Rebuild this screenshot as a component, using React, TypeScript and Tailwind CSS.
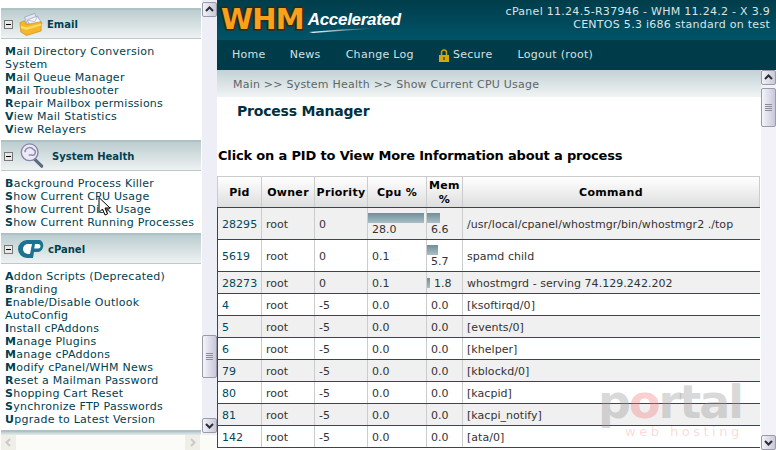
import React from "react";

const menus = [
  { title: "Email", icon: "mail", titleClass: "ml-[3px]", items: ["Mail Directory Conversion System", "Mail Queue Manager", "Mail Troubleshooter", "Repair Mailbox permissions", "View Mail Statistics", "View Relayers"] },
  { title: "System Health", icon: "health", titleClass: "ml-[8px]", items: ["Background Process Killer", "Show Current CPU Usage", "Show Current Disk Usage", "Show Current Running Processes"] },
  { title: "cPanel", icon: "cpanel", titleClass: "ml-[4px]", items: ["Addon Scripts (Deprecated)", "Branding", "Enable/Disable Outlook AutoConfig", "Install cPAddons", "Manage Plugins", "Manage cPAddons", "Modify cPanel/WHM News", "Reset a Mailman Password", "Shopping Cart Reset", "Synchronize FTP Passwords", "Upgrade to Latest Version"] },
];

const rows = [
  { pid: "28295", pri: "0", cpu: "28.0", cpuBar: 56, mem: "6.6", memBar: 13, cmd: "/usr/local/cpanel/whostmgr/bin/whostmgr2 ./top", h: "h-[32px]" },
  { pid: "5619", pri: "0", cpu: "0.1", cpuBar: 0, mem: "5.7", memBar: 11, cmd: "spamd child", h: "h-[32px]" },
  { pid: "28273", pri: "0", cpu: "0.1", cpuBar: 0, mem: "1.8", memBar: 3, cmd: "whostmgrd - serving 74.129.242.202", h: "h-[22px]", inline: true },
  { pid: "4", pri: "-5", cpu: "0.0", cpuBar: 0, mem: "0.0", memBar: 0, cmd: "[ksoftirqd/0]", h: "h-[22px]" },
  { pid: "5", pri: "-5", cpu: "0.0", cpuBar: 0, mem: "0.0", memBar: 0, cmd: "[events/0]", h: "h-[22px]" },
  { pid: "6", pri: "-5", cpu: "0.0", cpuBar: 0, mem: "0.0", memBar: 0, cmd: "[khelper]", h: "h-[22px]" },
  { pid: "79", pri: "-5", cpu: "0.0", cpuBar: 0, mem: "0.0", memBar: 0, cmd: "[kblockd/0]", h: "h-[22px]" },
  { pid: "80", pri: "-5", cpu: "0.0", cpuBar: 0, mem: "0.0", memBar: 0, cmd: "[kacpid]", h: "h-[22px]" },
  { pid: "81", pri: "-5", cpu: "0.0", cpuBar: 0, mem: "0.0", memBar: 0, cmd: "[kacpi_notify]", h: "h-[22px]" },
  { pid: "142", pri: "-5", cpu: "0.0", cpuBar: 0, mem: "0.0", memBar: 0, cmd: "[ata/0]", h: "h-[22px]" },
];

function MailIcon() {
  return (
    <svg width="24" height="25" viewBox="0 0 26 26">
      <path d="M6 5 L17 1 L21 10 L9 13 Z" fill="#e4e8f4" stroke="#8a94b8" strokeWidth="0.7" />
      <path d="M9 8 L20 4 L25 12 L12 15 Z" fill="#f4f6fc" stroke="#8a94b8" strokeWidth="0.7" />
      <path d="M10 8.5 L17 10 L20 4.5" fill="none" stroke="#9aa4c4" strokeWidth="0.7" />
      <path d="M1 11 L6 9 L8 13 L24 10 L24 20 L8 25 L2 21 Z" fill="#f4b62c" stroke="#c98a14" strokeWidth="0.7" />
      <path d="M2 14 L8 16 L24 12 L24 14 L8 19 L2 17 Z" fill="#ffdb5c" />
    </svg>
  );
}

function HealthIcon() {
  return (
    <svg width="25" height="26" viewBox="0 0 26 28">
      <path d="M16 17 L24 25" stroke="#5d6a80" strokeWidth="3.4" strokeLinecap="round" />
      <circle cx="11" cy="10" r="9" fill="#eceaf6" stroke="#8684a8" strokeWidth="1.4" />
      <path d="M6 10 a5 5 0 0 1 9 -3 M15 7 a3 3 0 0 1 -2 6 l-3 0" fill="none" stroke="#8e8bb0" strokeWidth="1.6" />
    </svg>
  );
}

function CpanelIcon() {
  return (
    <svg width="26" height="20" viewBox="0 0 26 20">
      <path d="M9 1 L22 1 A6.5 6.5 0 0 1 20 13 L16 13 L15 19 L9 19 A9 9 0 0 1 9 1 Z" fill="#1a7390" />
      <path d="M10 5 A5 5 0 0 0 10 15 L12 15 L14 5 Z" fill="#fff" />
      <path d="M17 5 L20.5 5 A2.2 2.2 0 0 1 20 9.5 L16.2 9.5 Z" fill="#fff" />
    </svg>
  );
}

const icons: Record<string, React.ReactNode> = {
  mail: <MailIcon />,
  health: <HealthIcon />,
  cpanel: <CpanelIcon />,
};

function SectionHead({ title, icon, titleClass }: { title: string; icon: string; titleClass: string }) {
  return (
    <div className="h-[31px] flex items-center pl-[3px] border-t-[2px] border-b-[1px] border-t-[#aec2c6] border-b-[#b9c9cc] bg-gradient-to-b from-[#bccdd0] to-[#eef2f2]">
      <div className="w-[9px] h-[9px] border border-[#777] bg-[#e8e8e8] flex items-center justify-center shrink-0">
        <div className="w-[5px] h-[1px] bg-black" />
      </div>
      <div className="ml-[5px] w-[26px] flex justify-center shrink-0">{icons[icon]}</div>
      <span className={titleClass + " font-bold text-[10px] text-[#00414f]"}>{title}</span>
    </div>
  );
}

function Arrow({ dir, pale }: { dir: "up" | "down" | "left" | "right"; pale?: boolean }) {
  const points = { up: "2,7 5.5,3.5 9,7", down: "2,4 5.5,7.5 9,4", left: "7,2 3.5,5.5 7,9", right: "4,2 7.5,5.5 4,9" }[dir];
  return (
    <svg width="11" height="11" viewBox="0 0 11 11">
      <polyline points={points} fill="none" stroke={pale ? "#c9c9cf" : "#2d2d36"} strokeWidth="2" />
    </svg>
  );
}

function ScrollButton({ dir }: { dir: "up" | "down" }) {
  return (
    <div className="w-[15px] h-[15px] shrink-0 flex items-center justify-center rounded-[2px] border border-[#9a9aa8] bg-gradient-to-r from-[#f2f2f8] to-[#c8c8d8]">
      <Arrow dir={dir} />
    </div>
  );
}

function Thumb({ height }: { height: string }) {
  return (
    <div className={height + " w-[15px] shrink-0 flex flex-col items-center justify-center gap-[1px] rounded-[2px] border border-[#9a9aa8] bg-gradient-to-r from-[#f4f4fa] to-[#c8c8dc]"}>
      <div className="w-[7px] h-[1px] bg-[#8a8a98]" />
      <div className="w-[7px] h-[1px] bg-[#8a8a98]" />
      <div className="w-[7px] h-[1px] bg-[#8a8a98]" />
      <div className="w-[7px] h-[1px] bg-[#8a8a98]" />
    </div>
  );
}

function Sidebar() {
  return (
    <div className="w-[217px] h-[450px] shrink-0 flex flex-col bg-white">
      <div className="h-[435px] flex">
        <div className="w-[200px] overflow-hidden pt-[8px] ml-[1px]">
          {menus.map((m) => (
            <div key={m.title}>
              <SectionHead title={m.title} icon={m.icon} titleClass={m.titleClass} />
              <ul className="pt-[6px] pb-[4px] pl-[4px] pr-[4px]">
                {m.items.map((item) => (
                  <li key={item} className="text-[11px] leading-[13px] text-[#00414f] tracking-[0.25px]">
                    <b>{item[0]}</b>{item.slice(1)}
                  </li>
                ))}
              </ul>
            </div>
          ))}
          <div className="h-[5px] border-t-[2px] border-[#aec2c6] bg-gradient-to-b from-[#bccdd0] to-[#e4ebeb]" />
        </div>
        <div className="w-[15px] ml-[1px] pt-[2px] flex flex-col bg-[#eeeef6]">
          <ScrollButton dir="up" />
          <div className="h-[318px] shrink-0" />
          <Thumb height="h-[43px]" />
          <div className="h-[40px] shrink-0" />
          <ScrollButton dir="down" />
        </div>
      </div>
      <div className="h-[15px] pl-[1px] pr-[17px] flex justify-between bg-[#fbfbf8]">
        <div className="w-[15px] h-[15px] flex items-center justify-center bg-[#efefe8]"><Arrow dir="left" pale /></div>
        <div className="w-[15px] h-[15px] flex items-center justify-center bg-[#efefe8]"><Arrow dir="right" pale /></div>
      </div>
    </div>
  );
}

function Logo() {
  return (
    <div className="relative pl-[4px] pt-[6px] flex items-start">
      <span className="font-bold text-[29px] leading-[26px] text-[#f9a11b] [-webkit-text-stroke:3px_#33281a] [paint-order:stroke_fill] tracking-[-0.8px]">WHM</span>
      <span className="ml-[4px] mt-[5px] font-['Liberation_Sans',sans-serif] italic font-bold text-[17px] leading-[18px] text-white tracking-[-0.3px]">Accelerated</span>
      <svg width="70" height="5" viewBox="0 0 70 5" className="absolute left-[92px] top-[28px]">
        <defs>
          <linearGradient id="swoosh">
            <stop offset="0" stopColor="#fff" />
            <stop offset="1" stopColor="#fff" stopOpacity="0" />
          </linearGradient>
        </defs>
        <path d="M0 4 Q30 1 70 0 Q30 3 4 5 Z" fill="url(#swoosh)" />
      </svg>
    </div>
  );
}

function TopBar() {
  return (
    <div className="shrink-0">
      <div className="h-[40px] flex justify-between bg-gradient-to-b from-[#003d4b] to-[#005468]">
        <Logo />
        <div className="pr-[6px] pt-[5px] text-right text-[11px] leading-[13px] text-[#d8e4e6] tracking-[0.28px]">
          <div>cPanel 11.24.5-R37946 - WHM 11.24.2 - X 3.9</div>
          <div>CENTOS 5.3 i686 standard on test</div>
        </div>
      </div>
      <nav className="h-[30px] flex items-center pl-[15px] pt-[1px] bg-[#003b4a] text-[11px] text-[#d4e0e2] tracking-[0.3px]">
        <span>Home</span>
        <span className="ml-[24px]">News</span>
        <span className="ml-[25px]">Change Log</span>
        <span className="ml-[25px] flex items-center">
          <svg width="10" height="13" viewBox="0 0 10 13" className="mr-[4px]">
            <path d="M2.5 6 V3.5 a2.5 2.5 0 0 1 5 0 V6" fill="none" stroke="#c8a010" strokeWidth="1.5" />
            <rect x="0" y="6" width="10" height="7" fill="#d4a80c" />
            <rect x="4" y="8" width="2" height="3" fill="#7a6006" />
          </svg>
          Secure
        </span>
        <span className="ml-[25px]">Logout (root)</span>
      </nav>
    </div>
  );
}

function ProcessRow({ r, i }: { r: (typeof rows)[number]; i: number }) {
  const line = "border-b border-b-[#34494f] border-r border-r-[#cccccc] pt-[1px]";
  const bar = "h-[10px] -ml-[4px] bg-gradient-to-b from-[#6f8f9a] to-[#a9bfc4]";
  return (
    <tr className={(i % 2 === 0 ? "bg-[#f0f0f0] " : "bg-white ") + r.h}>
      <td className={line + " border-l border-l-[#34494f] pl-[4px] text-[#00495c]"}>{r.pid}</td>
      <td className={line + " pl-[4px]"}>root</td>
      <td className={line + " pl-[4px]"}>{r.pri}</td>
      <td className={line + " pl-[4px]"}>
        {r.cpuBar > 0 && <div className={bar} style={{ width: r.cpuBar }} />}
        {r.cpu}
      </td>
      <td className={line + " pl-[4px]"}>
        {r.inline ? (
          <div className="flex items-center -ml-[4px]">
            <div className="h-[10px] bg-gradient-to-b from-[#6f8f9a] to-[#a9bfc4]" style={{ width: r.memBar }} />
            <span className="ml-[4px]">{r.mem}</span>
          </div>
        ) : (
          <>
            {r.memBar > 0 && <div className={bar} style={{ width: r.memBar }} />}
            {r.mem}
          </>
        )}
      </td>
      <td className="border-b border-b-[#34494f] pt-[1px] pl-[4px] whitespace-nowrap">{r.cmd}</td>
    </tr>
  );
}

function Main() {
  return (
    <div className="flex-1 min-w-0 overflow-hidden bg-white">
      <div className="h-[27px] flex items-center pl-[16px] pt-[3px] bg-gradient-to-b from-[#c3d2d5] to-[#f1f4f4] text-[11px] text-[#5c6668] tracking-[0.22px]">
        Main &gt;&gt; System Health &gt;&gt; Show Current CPU Usage
      </div>
      <h1 className="pl-[20px] pt-[5px] font-bold text-[14px] leading-[18px] text-[#00313f] tracking-[-0.2px]">Process Manager</h1>
      <p className="pl-[1px] pt-[28px] font-bold text-[13px] leading-[16px] text-black tracking-[-0.17px]">Click on a PID to View More Information about a process</p>
      <table className="mt-[12px] table-fixed border-collapse w-[543px] text-[11px] leading-[13px] text-[#333] tracking-[0.04px]">
        <colgroup>
          <col className="w-[44px]" />
          <col className="w-[53px]" />
          <col className="w-[53px]" />
          <col className="w-[59px]" />
          <col className="w-[36px]" />
          <col />
        </colgroup>
        <thead>
          <tr className="h-[31px] bg-gradient-to-b from-white to-[#dddddd] text-black text-[11px] leading-[14px] tracking-[0.3px] font-bold">
            {["Pid", "Owner", "Priority", "Cpu %", "Mem %", "Command"].map((h) => (
              <th key={h} className="border border-[#cccccc] border-b-[#34494f] font-bold px-0 pt-[2px]">{h}</th>
            ))}
          </tr>
        </thead>
        <tbody>
          {rows.map((r, i) => (
            <ProcessRow key={r.pid} r={r} i={i} />
          ))}
        </tbody>
      </table>
    </div>
  );
}

export default function App() {
  return (
    <div className="relative w-[776px] h-[450px] overflow-hidden flex bg-white font-['DejaVu_Sans',sans-serif]">
      <Sidebar />
      <div className="flex-1 min-w-0 flex flex-col">
        <TopBar />
        <div className="flex-1 min-h-0 flex">
          <Main />
          <div className="w-[15px] flex flex-col bg-[#f2f2f8]">
            <ScrollButton dir="up" />
            <div className="h-[3px] shrink-0" />
            <Thumb height="h-[39px]" />
            <div className="flex-1" />
            <ScrollButton dir="down" />
          </div>
        </div>
      </div>
      {/* mouse pointer over the sidebar */}
      <svg width="14" height="21" viewBox="0 0 14 20" className="absolute left-[98px] top-[196px]">
        <path d="M1 1 L1 16 L4.5 12.5 L7 18.5 L9.5 17.5 L7 11.5 L12 11.5 Z" fill="#fff" stroke="#000" strokeWidth="1" />
      </svg>
      {/* watermark */}
      <div className="absolute left-[598px] top-[385px] w-[164px] pointer-events-none">
        <div className="font-bold text-[46px] leading-[34px] text-[#9a9a9a]/40 tracking-[-2px]">
          p<span className="text-[#f08080]/40">o</span>rtal
        </div>
        <div className="ml-[27px] mt-[6px] text-[13px] leading-[14px] tracking-[3.5px] text-[#f08080]/30 whitespace-nowrap">web hosting</div>
      </div>
    </div>
  );
}
